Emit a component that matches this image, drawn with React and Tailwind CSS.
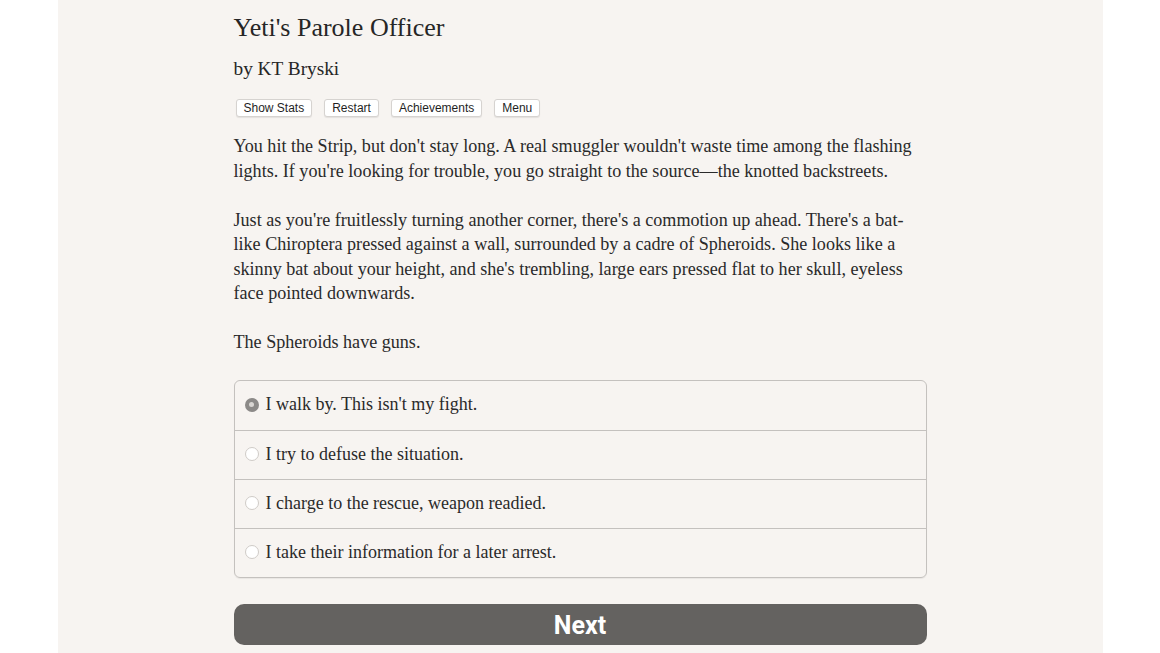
import React from "react";

const serif = { fontFamily: '"Liberation Serif", "DejaVu Serif", serif' };

function Radio({ selected }) {
  return selected ? (
    <span className="w-[14px] h-[14px] rounded-full bg-[#8c8a88] flex items-center justify-center shrink-0">
      <span className="w-[5px] h-[5px] rounded-full bg-[#d9d6d3]" />
    </span>
  ) : (
    <span className="w-[14px] h-[14px] rounded-full bg-white border border-[#cfcbc7] shrink-0" />
  );
}

export default function App() {
  const options = [
    "I walk by. This isn't my fight.",
    "I try to defuse the situation.",
    "I charge to the rescue, weapon readied.",
    "I take their information for a later arrest.",
  ];
  const btn =
    "bg-white border border-[#d6d3d0] rounded-[3px] px-[7px] h-[18px] flex items-center text-[12px] text-[#1f1f1f] leading-none shadow-[0_1px_1px_rgba(0,0,0,0.08)]";
  return (
    <div className="w-[1160px] h-[653px] bg-white flex justify-center overflow-hidden">
      <div className="w-[1045px] h-full bg-[#f7f4f1] flex justify-center">
        <div className="w-[693px] pt-[12px] text-[#2a2a2a]" style={serif}>
          <h1 className="text-[26px] leading-[32px] text-[#262626]">Yeti's Parole Officer</h1>
          <h2 className="text-[19.3px] leading-[26px] mt-[12px] text-[#262626]">by KT Bryski</h2>
          <div
            className="flex gap-[12px] mt-[17px] ml-[2px]"
            style={{ fontFamily: '"Liberation Sans", Arial, sans-serif' }}
          >
            <button className={btn}>Show Stats</button>
            <button className={btn}>Restart</button>
            <button className={btn}>Achievements</button>
            <button className={btn}>Menu</button>
          </div>
          <div className="text-[18.1px] leading-[24.5px] mt-[17px]">
            <p>
              You hit the Strip, but don't stay long. A real smuggler wouldn't waste time among the flashing
              <br />
              lights. If you're looking for trouble, you go straight to the source—the knotted backstreets.
            </p>
            <p className="mt-[24.5px]">
              Just as you're fruitlessly turning another corner, there's a commotion up ahead. There's a bat-
              <br />
              like Chiroptera pressed against a wall, surrounded by a cadre of Spheroids. She looks like a
              <br />
              skinny bat about your height, and she's trembling, large ears pressed flat to her skull, eyeless
              <br />
              face pointed downwards.
            </p>
            <p className="mt-[24.5px]">The Spheroids have guns.</p>
          </div>
          <div className="mt-[25px] border border-[#c4c1be] rounded-[6px] shadow-[0_1px_1px_rgba(0,0,0,0.06)]">
            {options.map((o, i) => (
              <div
                key={i}
                className={
                  "h-[49px] flex items-center gap-[7px] pl-[10px] pb-[1px] text-[18px] " +
                  (i > 0 ? "border-t border-[#c4c1be]" : "")
                }
              >
                <Radio selected={i === 0} />
                <span>{o}</span>
              </div>
            ))}
          </div>
          <button
            className="mt-[26px] w-full h-[41px] pt-[3px] rounded-[10px] bg-[#646260] text-white text-[25px] font-bold flex items-center justify-center"
            style={{ fontFamily: '"Roboto", "Liberation Sans", sans-serif' }}
          >
            Next
          </button>
        </div>
      </div>
    </div>
  );
}
